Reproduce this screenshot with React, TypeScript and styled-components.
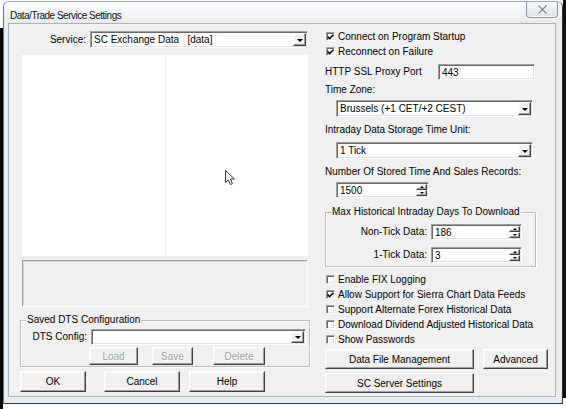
import styled, { createGlobalStyle, css } from 'styled-components';

const GlobalStyle = createGlobalStyle`
  html, body {
    margin: 0;
    padding: 0;
    background: #ffffff;
  }
  body {
    font-family: "Liberation Sans", Arial, sans-serif;
    font-size: 10px;
    color: #000;
  }
  * {
    box-sizing: border-box;
  }
`;

const sunken = css`
  border: 1px solid;
  border-color: #a0a0a0 #ffffff #ffffff #a0a0a0;
  box-shadow: inset 1px 1px 0 #696969, inset -1px -1px 0 #e3e3e3;
`;

const raised = css`
  border: 1px solid;
  border-color: #ffffff #404040 #404040 #ffffff;
  box-shadow: inset -1px -1px 0 #a0a0a0, inset 1px 1px 0 #f8f8f8;
  background: #f0f0f0;
`;

const Screen = styled.div`
  width: 566px;
  height: 409px;
  display: flex;
  align-items: flex-start;
  overflow: hidden;
  background: #ffffff;
`;

const DesktopEdge = styled.div<{ $top: number; $height: number; $bg: string }>`
  width: 3px;
  margin-top: ${(p) => p.$top}px;
  height: ${(p) => p.$height}px;
  background: ${(p) => p.$bg};
`;

const Window = styled.div`
  width: 560px;
  height: 403px;
  margin-top: 1px;
  display: flex;
  flex-direction: column;
  background: #e8edf2;
  border: 1px solid #2f3338;
  border-top-color: #9aa4ae;
  border-left-color: #6b737b;
  border-radius: 6px 6px 0 0;
  padding: 0 6px 6px 4px;
`;

const TitleBar = styled.div`
  height: 21px;
  display: flex;
  align-items: flex-start;
  background: linear-gradient(#fbfcfd, #e8edf2);
  margin: 0 -6px 0 -4px;
  padding-left: 6px;
  border-radius: 5px 5px 0 0;
`;

const TitleText = styled.div`
  font-size: 10px;
  letter-spacing: -0.5px;
  line-height: 12px;
  margin-top: 8px;
  color: #111;
`;

const CloseButton = styled.div`
  margin-left: auto;
  margin-right: 4px;
  width: 32px;
  height: 16px;
  display: flex;
  align-items: center;
  justify-content: center;
  background: linear-gradient(#f6f8fa, #dde3e9);
  border: 1px solid #8d99a6;
  border-top: none;
  border-radius: 0 0 4px 4px;
  box-shadow: inset 0 -1px 0 #ffffff;
`;

const Client = styled.div`
  flex: 1;
  display: flex;
  background: #f0f0f0;
  border: 1px solid #aab4be;
  padding-left: 11px;
`;

const LeftColumn = styled.div`
  width: 290px;
  display: flex;
  flex-direction: column;
  padding-top: 7px;
`;

const RightColumn = styled.div`
  width: 224px;
  margin-left: 15px;
  display: flex;
  flex-direction: column;
  padding-top: 5px;
`;

const Row = styled.div<{ $mt?: number; $pl?: number; $h?: number }>`
  display: flex;
  align-items: center;
  margin-top: ${(p) => p.$mt ?? 0}px;
  padding-left: ${(p) => p.$pl ?? 0}px;
  height: ${(p) => (p.$h ? `${p.$h}px` : 'auto')};
`;

const Label = styled.div<{ $w?: number; $right?: boolean; $mt?: number }>`
  width: ${(p) => (p.$w ? `${p.$w}px` : 'auto')};
  text-align: ${(p) => (p.$right ? 'right' : 'left')};
  padding-right: ${(p) => (p.$right ? 4 : 0)}px;
  margin-top: ${(p) => p.$mt ?? 0}px;
  line-height: 12px;
  white-space: nowrap;
`;

const Combo = styled.div<{ $w: number; $h?: number; $ml?: number; $mt?: number }>`
  ${sunken};
  width: ${(p) => p.$w}px;
  height: ${(p) => p.$h ?? 17}px;
  margin-left: ${(p) => p.$ml ?? 0}px;
  margin-top: ${(p) => p.$mt ?? 0}px;
  flex-shrink: 0;
  background: #ffffff;
  display: flex;
  align-items: stretch;
  padding: 1px;
`;

const FieldText = styled.div`
  flex: 1;
  padding-left: 2px;
  display: flex;
  align-items: center;
  white-space: pre;
  overflow: hidden;
`;

const ComboArrow = styled.div`
  ${raised};
  width: 13px;
  display: flex;
  align-items: center;
  justify-content: center;

  &::after {
    content: '';
    border-left: 3px solid transparent;
    border-right: 3px solid transparent;
    border-top: 3px solid #000;
    margin-top: 1px;
  }
`;

const TextBox = styled.div<{ $w: number; $h?: number; $ml?: number; $mt?: number }>`
  ${sunken};
  width: ${(p) => p.$w}px;
  height: ${(p) => p.$h ?? 16}px;
  margin-left: ${(p) => p.$ml ?? 0}px;
  margin-top: ${(p) => p.$mt ?? 0}px;
  flex-shrink: 0;
  background: #ffffff;
  display: flex;
  align-items: stretch;
  padding: 1px;
`;

const SpinButtons = styled.div`
  width: 11px;
  display: flex;
  flex-direction: column;
`;

const SpinHalf = styled.div<{ $up?: boolean }>`
  ${raised};
  flex: 1;
  display: flex;
  align-items: center;
  justify-content: center;

  &::after {
    content: '';
    border-left: 2px solid transparent;
    border-right: 2px solid transparent;
    ${(p) => (p.$up ? 'border-bottom: 2px solid #000;' : 'border-top: 2px solid #000;')}
  }
`;

const List = styled.div`
  position: relative;
  margin: 7px 0 0 2px;
  width: 286px;
  height: 201px;
  background: #ffffff;
  display: flex;
`;

const ListColumn = styled.div`
  width: 144px;
  border-right: 1px solid #ececec;
`;

const Pointer = styled.svg`
  position: absolute;
  left: 203px;
  top: 115px;
`;

const StaticBox = styled.div`
  margin: 4px 0 0 2px;
  width: 286px;
  height: 47px;
  border: 1px solid;
  border-color: #a0a0a0 #ffffff #ffffff #a0a0a0;
  box-shadow: 1px 1px 0 #d6d6d6 inset;
`;

const Group = styled.div<{ $w: number; $h: number; $mt: number; $pt: number }>`
  position: relative;
  width: ${(p) => p.$w}px;
  height: ${(p) => p.$h}px;
  margin-top: ${(p) => p.$mt}px;
  padding-top: ${(p) => p.$pt}px;
  border: 1px solid #bcbcbc;
  box-shadow: inset 1px 1px 0 #ffffff, 1px 1px 0 #ffffff;
  display: flex;
  flex-direction: column;
`;

const GroupTitle = styled.div`
  position: absolute;
  top: -7px;
  left: 5px;
  padding: 0 1px;
  background: #f0f0f0;
  line-height: 12px;
  white-space: nowrap;
`;

const Button = styled.div<{ $w: number; $h: number; $ml?: number; $disabled?: boolean }>`
  ${raised};
  width: ${(p) => p.$w}px;
  height: ${(p) => p.$h}px;
  margin-left: ${(p) => p.$ml ?? 0}px;
  flex-shrink: 0;
  display: flex;
  align-items: center;
  justify-content: center;
  color: ${(p) => (p.$disabled ? '#a0a0a0' : '#000')};
  text-shadow: ${(p) => (p.$disabled ? '1px 1px 0 #ffffff' : 'none')};
  white-space: nowrap;
`;

const CheckRow = styled.div<{ $mt?: number }>`
  height: 15px;
  display: flex;
  align-items: center;
  margin-top: ${(p) => p.$mt ?? 0}px;
  padding-left: 1px;
`;

const CheckBox = styled.div`
  ${sunken};
  width: 9px;
  height: 9px;
  background: #ffffff;
  display: flex;
  align-items: center;
  justify-content: center;
  margin-right: 3px;
`;

const CheckLabel = styled.span`
  line-height: 12px;
  white-space: nowrap;
`;

const Check = ({ label, checked, mt }: { label: string; checked?: boolean; mt?: number }) => (
  <CheckRow $mt={mt}>
    <CheckBox>
      {checked && (
        <svg width="7" height="6" viewBox="0 0 7 6">
          <path d="M0.6 2.6 L2.6 4.6 L6.4 0.8" fill="none" stroke="#000" strokeWidth="1.5" />
        </svg>
      )}
    </CheckBox>
    <CheckLabel>{label}</CheckLabel>
  </CheckRow>
);

const Spin = ({ value, w, ml }: { value: string; w: number; ml?: number }) => (
  <TextBox $w={w} $ml={ml}>
    <FieldText>{value}</FieldText>
    <SpinButtons>
      <SpinHalf $up />
      <SpinHalf />
    </SpinButtons>
  </TextBox>
);

const App = () => {
  return (
    <>
      <GlobalStyle />
      <Screen>
        <DesktopEdge $top={28} $height={381} $bg="#050505" />
        <Window>
          <TitleBar>
            <TitleText>Data/Trade Service Settings</TitleText>
            <CloseButton>
              <svg width="11" height="9" viewBox="0 0 11 9">
                <path d="M2 1 L9 8 M9 1 L2 8" stroke="#ffffff" strokeWidth="3.2" strokeLinecap="square" />
                <path d="M2 1 L9 8 M9 1 L2 8" stroke="#8a929b" strokeWidth="1.6" strokeLinecap="square" />
              </svg>
            </CloseButton>
          </TitleBar>
          <Client>
            <LeftColumn>
              <Row $h={17}>
                <Label $w={70} $right>
                  Service:
                </Label>
                <Combo $w={218}>
                  <FieldText>SC Exchange Data   [data]</FieldText>
                  <ComboArrow />
                </Combo>
              </Row>
              <List>
                <ListColumn />
                <Pointer width="11" height="17" viewBox="0 0 11 17">
                  <path
                    d="M0.5 0.5 L0.5 12.5 L3.4 9.8 L5.4 14.6 L7.4 13.7 L5.5 9 L9.4 9 Z"
                    fill="#ffffff"
                    stroke="#3a3a3a"
                    strokeWidth="1"
                  />
                </Pointer>
              </List>
              <StaticBox />
              <Group $w={290} $h={47} $mt={13} $pt={8}>
                <GroupTitle>Saved DTS Configuration</GroupTitle>
                <Row $pl={7}>
                  <Label $w={63} $right>
                    DTS Config:
                  </Label>
                  <Combo $w={215} $h={16}>
                    <FieldText />
                    <ComboArrow />
                  </Combo>
                </Row>
                <Row $mt={2}>
                  <Button $w={49} $h={18} $ml={68} $disabled>
                    Load
                  </Button>
                  <Button $w={41} $h={18} $ml={14} $disabled>
                    Save
                  </Button>
                  <Button $w={52} $h={18} $ml={20} $disabled>
                    Delete
                  </Button>
                </Row>
              </Group>
              <Row $mt={4}>
                <Button $w={66} $h={21}>
                  OK
                </Button>
                <Button $w={76} $h={21} $ml={18}>
                  Cancel
                </Button>
                <Button $w={76} $h={21} $ml={9}>
                  Help
                </Button>
              </Row>
            </LeftColumn>

            <RightColumn>
              <Check label="Connect on Program Startup" checked />
              <Check label="Reconnect on Failure" checked />
              <Row $mt={5}>
                <Label $w={113}>HTTP SSL Proxy Port</Label>
                <TextBox $w={97}>
                  <FieldText>443</FieldText>
                </TextBox>
              </Row>
              <Label $mt={4}>Time Zone:</Label>
              <Combo $w={197} $ml={11} $mt={4}>
                <FieldText>Brussels (+1 CET/+2 CEST)</FieldText>
                <ComboArrow />
              </Combo>
              <Label $mt={7}>Intraday Data Storage Time Unit:</Label>
              <Combo $w={197} $ml={11} $mt={6}>
                <FieldText>1 Tick</FieldText>
                <ComboArrow />
              </Combo>
              <Label $mt={7}>Number Of Stored Time And Sales Records:</Label>
              <Row $mt={4}>
                <Spin value="1500" w={93} ml={11} />
              </Row>
              <Group $w={211} $h={55} $mt={14} $pt={11}>
                <GroupTitle>Max Historical Intraday Days To Download</GroupTitle>
                <Row>
                  <Label $w={105} $right>
                    Non-Tick Data:
                  </Label>
                  <Spin value="186" w={91} />
                </Row>
                <Row $mt={7}>
                  <Label $w={105} $right>
                    1-Tick Data:
                  </Label>
                  <Spin value="3" w={91} />
                </Row>
              </Group>
              <Check label="Enable FIX Logging" mt={5} />
              <Check label="Allow Support for Sierra Chart Data Feeds" checked />
              <Check label="Support Alternate Forex Historical Data" />
              <Check label="Download Dividend Adjusted Historical Data" />
              <Check label="Show Passwords" />
              <Row $mt={2}>
                <Button $w={149} $h={20}>
                  Data File Management
                </Button>
                <Button $w={65} $h={20} $ml={9}>
                  Advanced
                </Button>
              </Row>
              <Row $mt={4}>
                <Button $w={149} $h={20}>
                  SC Server Settings
                </Button>
              </Row>
            </RightColumn>
          </Client>
        </Window>
        <DesktopEdge $top={0} $height={398} $bg="#0c130c" />
      </Screen>
    </>
  );
};

export default App;
